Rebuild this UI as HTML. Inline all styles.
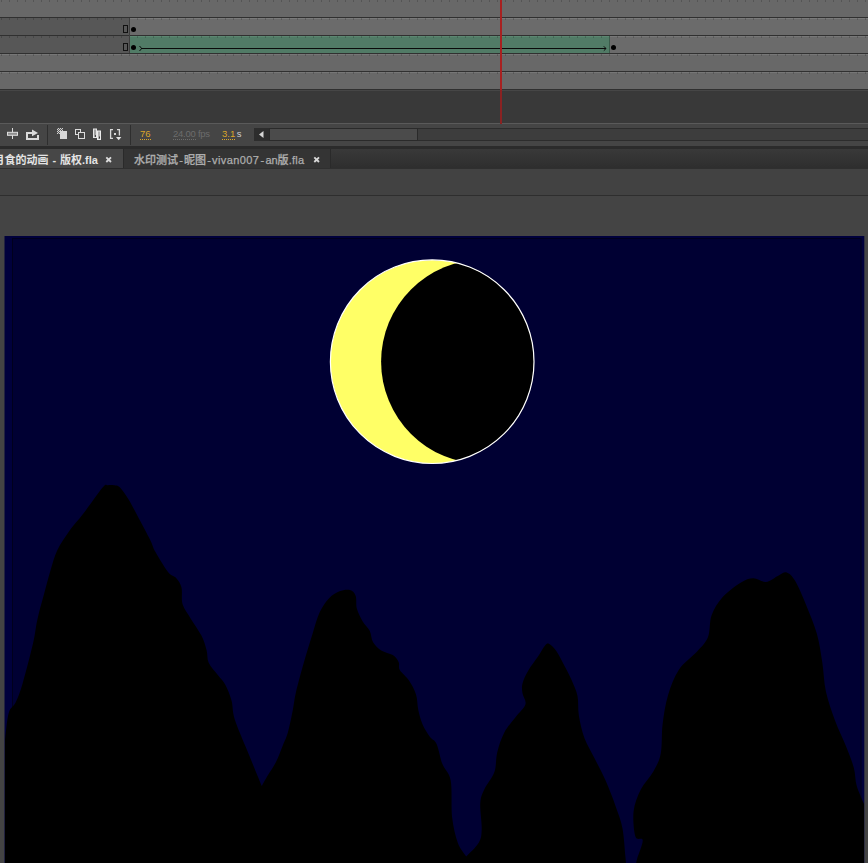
<!DOCTYPE html>
<html lang="zh"><head><meta charset="utf-8"><title>Animate</title>
<style>
html,body{margin:0;padding:0;}
body{width:868px;height:863px;overflow:hidden;position:relative;background:#444444;font-family:"Liberation Sans","Noto Sans CJK SC",sans-serif;}
.a{position:absolute;}
#tl{left:0;top:0;width:868px;height:90px;background:#686868;}
.hl{position:absolute;left:0;width:868px;height:1px;background:#303030;}
.hi{position:absolute;left:0;width:868px;height:1px;background:#777777;}
.tk{position:absolute;left:0;width:868px;height:2px;background:repeating-linear-gradient(90deg,transparent 0,transparent 1px,rgba(0,0,0,0.18) 1px,rgba(0,0,0,0.18) 2px,transparent 2px,transparent 8px);}
.tab{position:absolute;top:149px;height:19px;font-size:11px;line-height:19px;white-space:nowrap;}
.num{position:absolute;top:128px;font-size:9.5px;line-height:12px;white-space:nowrap;}
.gold{color:#d9a629;}
.hy{padding:0 1.2px;}
.dot{border-bottom:1px dotted currentColor;}
</style></head><body>
<!-- timeline -->
<div id="tl" class="a">
  <div class="a" style="left:0;top:18px;width:129px;height:35px;background:#575757"></div>
  <div class="a" style="left:130px;top:18px;width:738px;height:17px;background:#6b6b6b;border-top:1px solid #7a7a7a;box-sizing:border-box"></div>
  <div class="a" style="left:610px;top:36px;width:258px;height:17px;background:#6b6b6b;border-top:1px solid #787878;box-sizing:border-box"></div>
  <div class="a" style="left:130px;top:36px;width:479px;height:17px;background:#517b66;border-top:1px solid #5c8771;box-sizing:border-box"></div>
  <div class="hi" style="top:54px"></div><div class="hi" style="top:72px"></div>
  <div class="hl" style="top:17px"></div><div class="tk" style="top:18px"></div>
  <div class="hl" style="top:35px"></div><div class="tk" style="top:36px"></div>
  <div class="hl" style="top:53px"></div><div class="tk" style="top:54px"></div>
  <div class="hl" style="top:71px"></div><div class="tk" style="top:72px"></div>
  <div class="tk" style="top:0px"></div>
  <div class="hl" style="top:89px;background:#303030"></div>
  <div class="a" style="left:129px;top:18px;width:1px;height:35px;background:#3e3e3e"></div>
  <div class="a" style="left:609px;top:36px;width:1px;height:17px;background:#3a5a4a"></div>
  <!-- markers -->
  <div class="a" style="left:123px;top:25px;width:3px;height:6px;border:1px solid #111"></div>
  <div class="a" style="left:123px;top:43px;width:3px;height:6px;border:1px solid #111"></div>
  <div class="a" style="left:131px;top:27px;width:5px;height:5px;border-radius:50%;background:#000"></div>
  <div class="a" style="left:131px;top:45px;width:5px;height:5px;border-radius:50%;background:#000"></div>
  <div class="a" style="left:611px;top:45px;width:5px;height:5px;border-radius:50%;background:#000"></div>
  <svg class="a" style="left:0;top:0" width="868" height="90"><g fill="none" stroke="#0a0a0a" stroke-width="1"><path d="M141 48.5H606"/><path d="M139.5 46L141.7 48.5L139.5 51"/><path d="M603.8 46.3L606 48.5L603.8 50.7"/></g></svg>
</div>
<div class="a" style="left:0;top:90px;width:868px;height:33px;background:#393939;border-top:1px solid #464646;box-sizing:border-box"></div>
<div class="a" style="left:0;top:123px;width:868px;height:1px;background:#5a5a5a"></div>
<div class="a" style="left:0;top:124px;width:868px;height:22px;background:#454545"></div>
<div class="a" style="left:500px;top:0;width:2px;height:90px;background:#a82020"></div><div class="a" style="left:500px;top:90px;width:2px;height:34px;background:#8a2222"></div>
<!-- toolbar -->
<div class="a" style="left:47px;top:125px;width:1px;height:20px;background:#2e2e2e"></div>
<div class="a" style="left:130px;top:125px;width:1px;height:20px;background:#2e2e2e"></div>
<svg class="a" style="left:0;top:124px" width="140" height="22">
 <path d="M12.5 4V15" stroke="#dcdcdc" stroke-width="1" fill="none"/>
 <rect x="7.5" y="8.3" width="10" height="3" fill="#8e8e8e" stroke="#dedede" stroke-width="1"/>
 <path d="M26 8h6v2h-4v4h9v-3h2v5h-13z" fill="#dadada"/><path d="M32 5.5L38 9L32 12.3z" fill="#dadada"/>
 <defs><pattern id="ck" width="2" height="2" patternUnits="userSpaceOnUse"><rect width="2" height="2" fill="#5a5a5a"/><rect width="1" height="1" fill="#d0d0d0"/><rect x="1" y="1" width="1" height="1" fill="#d0d0d0"/></pattern></defs><rect x="57" y="4" width="6" height="6" fill="url(#ck)"/><rect x="60" y="7" width="7" height="8" fill="#d6d6d6"/>
 <g fill="none" stroke="#dcdcdc" stroke-width="1"><rect x="75.5" y="5.5" width="5" height="5"/><rect x="78.5" y="8.5" width="6" height="6" fill="#454545"/></g>
 <rect x="93.5" y="5" width="3" height="8.5" fill="#a0a0a0" stroke="#e6e6e6"/><rect x="97.5" y="7" width="3" height="8.5" fill="#b0b0b0" stroke="#ececec"/><rect x="95" y="11" width="1" height="2" fill="#444"/><rect x="99" y="12.5" width="1" height="2" fill="#333"/>
 <g fill="none" stroke="#dadada" stroke-width="1.3"><path d="M113 5.6h-2.4v8.8h2.4"/><path d="M117 5.6h2.4v6"/></g>
 <rect x="114" y="9" width="2" height="2" fill="#dadada"/><path d="M116 13h5.4l-2.7 3.2z" fill="#e4e4e4"/>
</svg>
<div class="num gold" style="left:140px"><span class="dot">76</span></div>
<div class="num" style="left:173px;color:#6c6c6c;letter-spacing:-0.25px"><span class="dot">24.00</span> fps</div>
<div class="num gold" style="left:222px"><span class="dot">3.1</span><span style="color:#cfcfcf;margin-left:1.5px">s</span></div>
<!-- scrollbar -->
<div class="a" style="left:254px;top:128px;width:614px;height:13px;background:#3d3d3d;border-top:1px solid #2c2c2c;border-bottom:1px solid #2c2c2c;box-sizing:border-box"></div>
<div class="a" style="left:254px;top:128px;width:15px;height:13px;background:#2d2d2d"></div>
<svg class="a" style="left:254px;top:128px" width="15" height="13"><path d="M5 6.5L9.5 3V10Z" fill="#d6d6d6"/></svg>
<div class="a" style="left:269px;top:128px;width:149px;height:13px;background:#4b4b4b;border:1px solid #2a2a2a;box-sizing:border-box"></div>
<!-- tab bar -->
<div class="a" style="left:0;top:146px;width:868px;height:3px;background:#2b2b2b"></div>
<div class="a" style="left:0;top:149px;width:868px;height:19px;background:linear-gradient(#393939,#2e2e2e)"></div>
<div class="tab" style="left:0;width:123px;background:#474747;color:#e4e4e4;font-weight:bold"><span class="a" style="left:-6.5px;top:1.5px">月食的动画<span style="padding:0 0.9px"> - </span>版权.fla</span><svg class="a" style="left:105px;top:7px" width="8" height="8"><path d="M1.3 1.3L6 6M6 1.3L1.3 6" stroke="#dcdcdc" stroke-width="1.8" fill="none"/></svg></div>
<div class="a" style="left:123px;top:149px;width:1px;height:19px;background:#2a2a2a"></div>
<div class="tab" style="left:124px;width:206px;background:#343434;color:#adadad;-webkit-text-stroke:0.25px #adadad"><span class="a" style="left:10px;top:1.5px;font-weight:500">水印测试<span class="hy">-</span>昵图<span class="hy">-</span><span style="letter-spacing:0.4px">vivan007</span><span class="hy">-</span>an版<span style="letter-spacing:0.3px">.fla</span></span><svg class="a" style="left:189px;top:7px" width="8" height="8"><path d="M1.3 1.3L6 6M6 1.3L1.3 6" stroke="#d8d8d8" stroke-width="1.8" fill="none"/></svg></div>
<div class="a" style="left:330px;top:149px;width:1px;height:19px;background:#2a2a2a"></div>
<div class="a" style="left:0;top:168px;width:868px;height:1px;background:#2f2f2f"></div>
<div class="a" style="left:0;top:169px;width:868px;height:26px;background:#424242"></div>
<div class="a" style="left:0;top:195px;width:868px;height:1px;background:#2e2e2e"></div>
<!-- stage -->
<svg class="a" style="left:0;top:236px" width="868" height="627" viewBox="0 236 868 627">
 <rect x="4.5" y="236" width="859.8" height="628" fill="#00003c"/>
 <rect x="12.5" y="238.5" width="848.5" height="640" fill="#000033" stroke="#00001c" stroke-width="1"/>
 <defs><clipPath id="mc"><circle cx="432.2" cy="361.7" r="101.8"/></clipPath></defs>
 <circle cx="432.2" cy="361.7" r="101.8" fill="#ffff66"/>
 <circle cx="483.3" cy="361.7" r="102.2" fill="#000" clip-path="url(#mc)"/>
 <circle cx="432.2" cy="361.7" r="101.8" fill="none" stroke="#ffffff" stroke-width="1.2"/>
 <path d="M5 864L5 740C5.6 735.5 6.9 719.2 8.7 713.0C10.5 706.8 13.3 707.5 15.6 702.6C17.9 697.7 19.7 693.2 22.6 683.4C25.5 673.5 30.5 654.1 33.0 643.5C35.5 632.9 35.6 627.4 37.4 619.5C39.1 611.6 41.3 604.1 43.5 596.0C45.7 587.9 48.1 578.5 50.4 570.8C52.7 563.1 54.2 556.7 57.4 550.0C60.6 543.3 65.2 536.9 69.5 530.8C73.8 524.7 77.9 520.7 83.4 513.5C88.9 506.3 98.5 492.1 102.6 487.4C106.7 482.7 105.9 485.6 107.8 485.2C109.7 484.8 112.0 484.8 114.0 485.2C116.0 485.6 117.6 485.0 120.0 487.4C122.4 489.8 125.4 494.3 128.6 499.5C131.8 504.7 135.4 512.0 139.0 518.7C142.6 525.4 147.2 533.9 150.0 539.5C152.8 545.1 152.5 546.7 155.5 552.1C158.5 557.5 164.5 567.6 168.0 572.0C171.5 576.4 174.1 575.6 176.3 578.2C178.6 580.8 180.4 583.2 181.5 587.6C182.6 592.0 181.0 599.1 182.6 604.3C184.2 609.5 187.8 613.7 190.9 618.9C194.0 624.1 198.8 630.4 201.4 635.6C204.0 640.8 205.4 645.7 206.6 650.2C207.8 654.7 206.8 658.5 208.7 662.7C210.6 666.9 215.2 671.5 218.0 675.2C220.8 678.9 223.1 680.6 225.3 684.8C227.6 689.0 229.9 694.8 231.5 700.5C233.1 706.2 232.1 710.9 234.7 719.3C237.3 727.6 242.7 739.5 247.2 750.6C251.7 761.7 259.4 780.1 261.8 786.0L261.8 786.0C262.8 784.2 265.6 779.0 268.0 775.0C270.4 771.0 273.5 767.0 276.0 762.0C278.5 757.0 281.0 750.0 283.0 745.0C285.0 740.0 286.3 738.0 288.0 732.0C289.7 726.0 291.7 715.7 293.0 709.0C294.3 702.3 294.2 699.8 296.0 692.0C297.8 684.2 301.2 671.7 304.0 662.0C306.8 652.3 309.9 642.3 312.5 634.0C315.1 625.7 317.0 618.1 319.8 612.1C322.6 606.1 325.8 601.7 329.1 598.2C332.4 594.7 336.0 592.6 339.5 591.3C343.0 589.9 347.3 589.3 350.0 590.1C352.7 590.9 354.6 592.8 355.7 595.9C356.8 599.0 355.7 604.5 356.9 608.7C358.1 613.0 360.6 617.7 362.7 621.4C364.8 625.1 368.0 627.2 369.7 630.7C371.4 634.2 371.2 639.0 373.1 642.3C375.0 645.6 377.9 648.3 381.2 650.4C384.5 652.5 389.9 653.1 392.8 655.0C395.7 656.9 397.4 659.5 398.6 662.0C399.8 664.5 398.1 667.0 399.8 670.1C401.5 673.2 406.3 676.5 409.0 680.5C411.7 684.5 414.4 689.5 416.0 694.4C417.6 699.3 417.2 705.0 418.3 710.0C419.4 715.0 420.6 719.7 422.5 724.2C424.4 728.7 427.6 733.7 430.0 737.0C432.4 740.3 434.6 739.4 436.6 743.9C438.7 748.4 440.0 757.6 442.3 763.7C444.6 769.8 449.1 771.7 450.7 780.6C452.3 789.5 450.9 806.9 452.1 817.2C453.3 827.5 455.4 835.9 457.7 842.5C460.0 849.1 464.8 854.2 466.2 856.6L466.2 856.6C468.3 854.2 476.3 847.2 478.9 842.5C481.5 837.8 481.5 835.1 481.7 828.5C481.9 821.9 479.8 809.7 480.3 803.1C480.8 796.5 482.1 794.2 484.5 789.0C486.9 783.8 492.3 778.2 494.4 772.1C496.5 766.0 495.6 759.0 497.2 752.4C498.8 745.8 501.1 738.6 504.2 732.7C507.2 726.8 512.0 721.9 515.5 717.2C519.0 712.5 524.2 708.5 525.4 704.5C526.6 700.5 523.0 696.7 522.5 693.2C522.0 689.7 521.5 687.1 522.5 683.4C523.5 679.6 525.6 675.2 528.2 670.7C530.8 666.2 535.2 660.8 538.0 656.6C540.8 652.4 543.2 647.5 545.1 645.4C547.0 643.3 547.4 643.0 549.3 643.9C551.2 644.8 553.7 647.2 556.3 651.0C558.9 654.8 562.2 661.6 564.8 666.5C567.4 671.4 569.7 675.7 571.8 680.6C573.9 685.5 576.3 690.2 577.5 696.1C578.7 702.0 577.7 708.8 578.9 715.8C580.1 722.8 581.9 731.3 584.5 738.3C587.1 745.3 590.9 751.0 594.4 758.0C597.9 765.0 602.1 772.6 605.6 780.6C609.1 788.6 612.7 797.9 615.5 805.9C618.3 813.9 620.9 820.0 622.5 828.5C624.1 837.0 624.8 850.7 625.4 856.6C626.0 862.5 625.9 862.8 626.0 864.0L636.0 864.0C636.2 863.1 636.1 862.4 637.2 858.4C638.3 854.4 643.0 843.9 642.7 840.3C642.4 836.7 636.9 841.5 635.4 836.6C633.9 831.8 632.7 819.1 633.6 811.2C634.5 803.4 637.5 796.1 640.8 789.5C644.1 782.9 650.2 777.3 653.5 771.3C656.8 765.2 659.3 761.1 660.8 753.2C662.3 745.4 661.4 733.9 662.6 724.2C663.8 714.5 665.4 704.2 668.1 695.1C670.8 686.0 674.1 677.0 678.9 669.7C683.7 662.5 692.2 657.0 697.1 651.6C702.0 646.2 705.6 643.2 708.0 637.1C710.4 631.0 709.2 621.9 711.6 615.3C714.0 608.6 717.7 602.6 722.5 597.2C727.3 591.8 735.5 585.9 740.6 582.7C745.7 579.6 749.1 578.4 753.3 578.3C757.5 578.2 761.8 582.4 766.0 581.9C770.2 581.4 775.2 577.0 778.7 575.4C782.2 573.8 784.0 571.6 786.7 572.5C789.4 573.4 791.9 575.5 795.1 580.8C798.3 586.1 802.3 595.6 805.9 604.4C809.5 613.2 814.1 623.8 816.8 633.5C819.5 643.2 820.8 652.8 822.3 662.5C823.8 672.2 823.8 681.8 825.9 691.5C828.0 701.2 831.7 711.4 835.0 720.5C838.3 729.6 842.8 738.0 845.9 745.9C849.0 753.8 852.0 761.1 853.8 767.7C855.6 774.4 855.0 779.8 856.7 785.8C858.4 791.8 862.8 801.0 864.0 804.0L864 864Z" fill="#000"/>
</svg>
</body></html>
